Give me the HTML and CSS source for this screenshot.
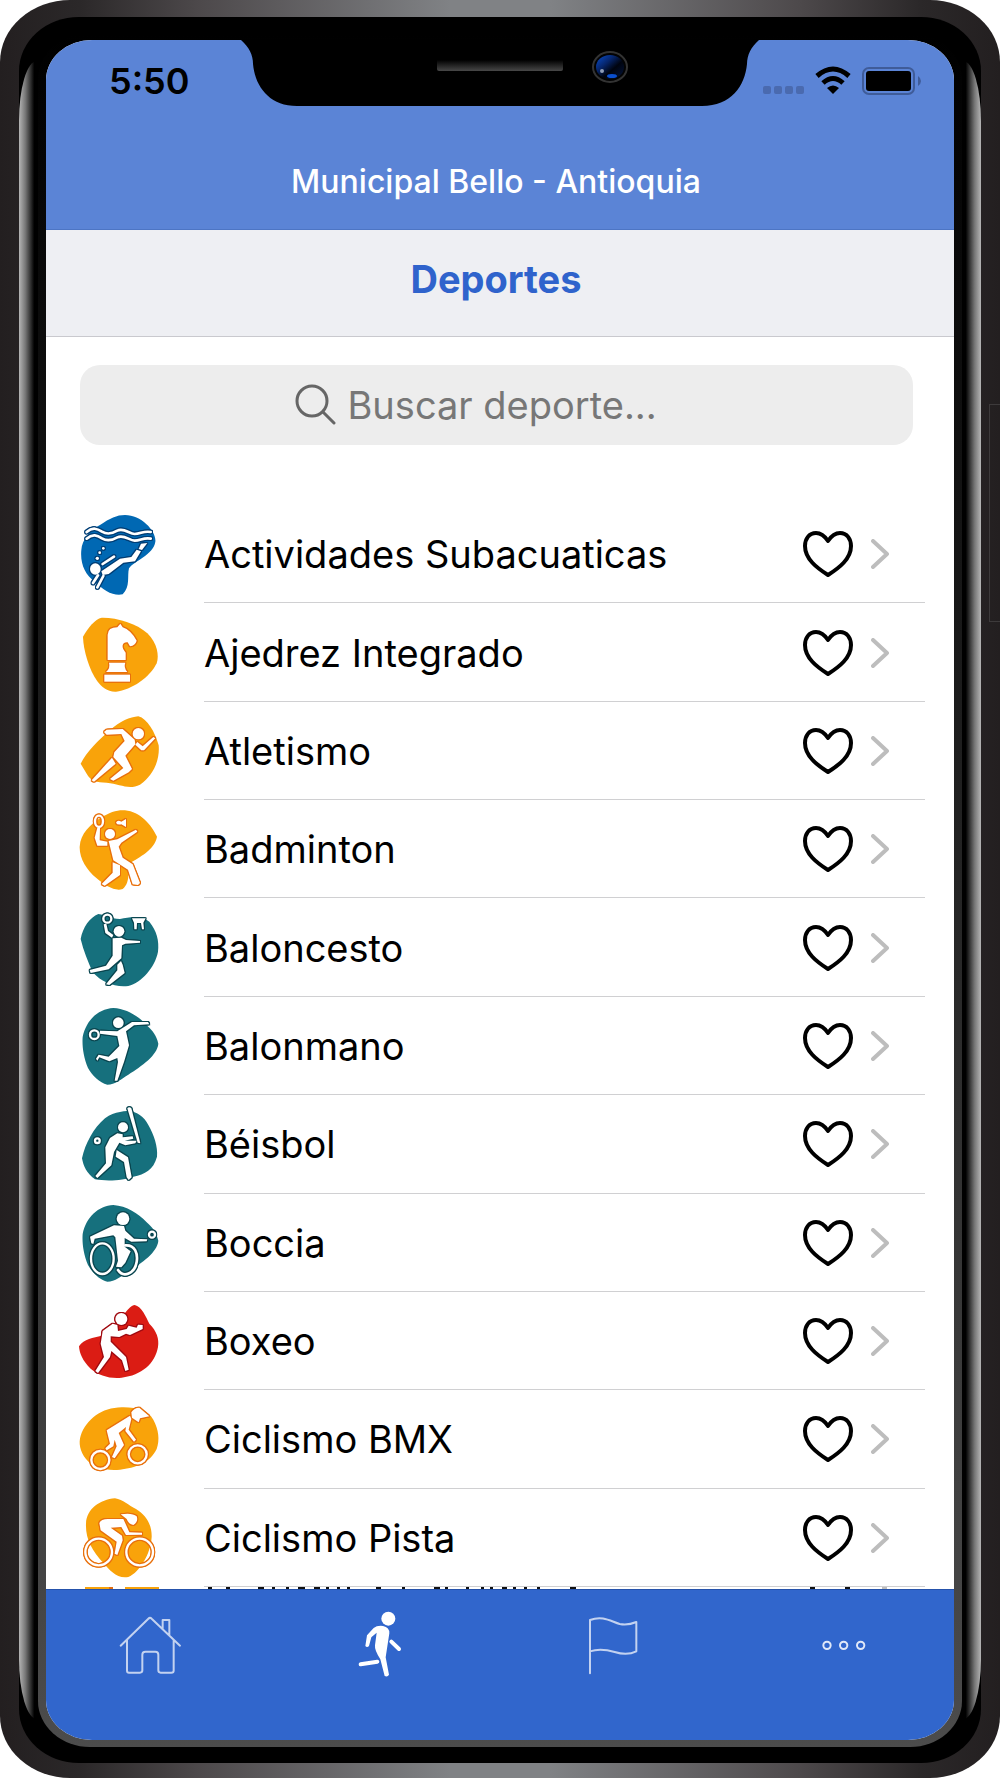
FILE: index.html
```html
<!DOCTYPE html>
<html lang="es">
<head>
  <meta charset="UTF-8">
  <meta name="viewport" content="width=device-width, initial-scale=1">
  <title>Deportes</title>
  <link rel="stylesheet" href="styles.css">
</head>
<body>

  <svg class="defs" aria-hidden="true">
    <symbol id="heart" viewBox="0 0 54 50">
      <path d="M27 12 C23 6 18 4 15 4 C8 4 4 10 4 17 C4 30 16 39 27 46 C38 39 50 30 50 17 C50 10 46 4 39 4 C36 4 31 6 27 12Z"/>
    </symbol>
    <symbol id="chevron" viewBox="0 0 18 30">
      <path d="M2 2 L16 15 L2 28"/>
    </symbol>
  </svg>

  <div class="phone">
    <div class="side-button"></div>
    <div class="bezel">
      <div class="rim">
        <div class="screen">

          <!-- Notch -->
          <svg class="notch" viewBox="0 0 518 67" aria-hidden="true">
            <defs>
              <linearGradient id="speaker" x1="0" y1="0" x2="0" y2="1">
                <stop offset="0" stop-color="#000"/>
                <stop offset="1" stop-color="#484848"/>
              </linearGradient>
              <linearGradient id="lens" x1="0" y1="0" x2="1" y2="1">
                <stop offset="0" stop-color="#0a4fd0"/>
                <stop offset="0.35" stop-color="#06256b"/>
                <stop offset="0.6" stop-color="#00040f"/>
                <stop offset="1" stop-color="#03153f"/>
              </linearGradient>
            </defs>
            <path d="M0 0 C8 7 12 15 12 24 C14 46 28 66 56 66 H461 C490 66 504 46 506 24 C506 15 510 7 518 0Z"/>
            <path d="M196 20 H322 V29 Q322 31 320 31 H198 Q196 31 196 29Z" fill="url(#speaker)"/>
            <ellipse cx="369" cy="27" rx="17" ry="15" fill="#030303" stroke="#333" stroke-width="2"/>
            <ellipse cx="369" cy="27" rx="14" ry="12" fill="url(#lens)"/>
            <circle cx="361" cy="31" r="2" fill="#8f9db8"/>
            <ellipse cx="371" cy="36" rx="5" ry="2" fill="#0a4fd0"/>
          </svg>

          <header class="topbar">
            <div class="status">
              <span class="clock">5:50</span>
              <svg class="status-icons" viewBox="0 0 160 30" aria-hidden="true">
                <g fill="#4a6aaf">
                  <rect x="1" y="20" width="8" height="8" rx="2"/>
                  <rect x="12" y="20" width="8" height="8" rx="2"/>
                  <rect x="23" y="20" width="8" height="8" rx="2"/>
                  <rect x="34" y="20" width="8" height="8" rx="2"/>
                </g>
                <g fill="none" stroke="#000" stroke-width="5">
                  <path d="M55 10 Q71 -4 87 10"/>
                  <path d="M61 17 Q71 8 81 17"/>
                </g>
                <path d="M71 28 L65 22 Q71 17 77 22Z"/>
                <rect x="101" y="2" width="51" height="26" rx="6" fill="none" stroke="#3f5c99" stroke-width="2"/>
                <rect x="104" y="5" width="45" height="20" rx="3"/>
                <path d="M156 10 Q159 12 159 15 Q159 18 156 20Z" fill="#3f5c99"/>
              </svg>
            </div>
            <p class="place">Municipal Bello - Antioquia</p>
          </header>

          <h1 class="section-title">Deportes</h1>

          <main class="content">
            <label class="search">
              <svg viewBox="0 0 42 42" aria-hidden="true">
                <circle cx="18" cy="17" r="15"/>
                <path d="M29 28 L40 39"/>
              </svg>
              <input type="search" placeholder="Buscar deporte..." aria-label="Buscar deporte">
            </label>

            <ul class="sports">
              <li class="sport">
                <svg class="icon navy" viewBox="54 36 252 252" aria-hidden="true">
                  <path class="blob" d="M195 45 C245 45 290 95 286 125 C280 165 222 182 207 205 C201 228 212 260 188 283 C162 290 128 270 105 245 C75 225 60 190 64 150 C66 120 90 90 120 75 C150 55 170 45 195 45Z"/>
                  <g class="figure">
                    <path class="line" d="M80 96 C98 80 112 86 126 95 C144 106 160 99 172 92 C192 82 208 102 224 102 C242 102 250 92 272 96"/>
                    <path class="line" d="M80 116 C98 100 112 106 126 115 C144 126 160 119 172 112 C192 102 208 122 224 122 C242 122 250 112 272 116"/>
                    <ellipse cx="106" cy="207" rx="16" ry="17"/>
                    <path d="M124 214 L180 176 L214 171 L230 149 L243 154 L225 184 L190 188 L146 222 L128 225Z"/>
                    <path d="M243 131 L262 129 L246 150 L236 147Z"/>
                    <path class="line" d="M128 192 L162 170 M114 226 L99 249 M130 228 L112 262"/>
                    <circle cx="112" cy="175" r="5"/><circle cx="119" cy="158" r="4"/><circle cx="130" cy="145" r="4"/>
                  </g>
                </svg>
                <a class="name" href="#">Actividades Subacuaticas</a>
                <button class="fav" aria-label="Marcar Actividades Subacuaticas"><svg><use href="#heart"/></svg></button>
                <svg class="chevron" aria-hidden="true"><use href="#chevron"/></svg>
              </li>

              <li class="sport">
                <svg class="icon orange" viewBox="54 331 252 252" aria-hidden="true">
                  <path class="blob" d="M125 351 C170 350 230 368 262 398 C292 428 298 465 290 488 C270 530 215 568 168 573 C142 574 125 560 112 542 C88 508 70 450 69 408 C85 380 105 355 125 351Z"/>
                  <g class="figure">
                    <path d="M143 478 L143 402 Q144 380 172 380 L181 369 L188 380 Q212 388 230 420 Q226 434 210 437 L203 425 Q190 424 188 434 Q186 444 197 456 L197 478Z"/>
                    <path d="M147 486 H196 Q190 500 202 514 H138 Q152 502 147 486Z"/>
                    <path d="M133 522 H210 V543 H133Z"/>
                  </g>
                </svg>
                <a class="name" href="#">Ajedrez Integrado</a>
                <button class="fav" aria-label="Marcar Ajedrez Integrado"><svg><use href="#heart"/></svg></button>
                <svg class="chevron" aria-hidden="true"><use href="#chevron"/></svg>
              </li>

              <li class="sport">
                <svg class="icon orange" viewBox="54 626 252 252" aria-hidden="true">
                  <path class="blob" d="M235 648 C262 655 285 695 296 735 C300 780 280 825 240 853 C205 870 180 850 140 847 C110 846 92 842 80 820 L62 790 C80 755 115 720 150 690 C180 662 210 650 235 648Z"/>
                  <g class="figure">
                    <circle cx="235" cy="700" r="17"/>
                    <path d="M132 695 L140 688 L188 686 L224 718 L226 732 L196 766 L216 806 L206 816 L160 841 L150 836 L190 803 L160 770 L163 756 L194 722 L184 701 L140 703Z"/>
                    <path d="M226 733 L232 725 L248 738 L280 710 L286 714 L252 750 L244 750Z"/>
                    <path d="M156 772 L167 790 L102 844 L95 840Z"/>
                  </g>
                </svg>
                <a class="name" href="#">Atletismo</a>
                <button class="fav" aria-label="Marcar Atletismo"><svg><use href="#heart"/></svg></button>
                <svg class="chevron" aria-hidden="true"><use href="#chevron"/></svg>
              </li>

              <li class="sport">
                <svg class="icon orange" viewBox="54 36 252 252" aria-hidden="true">
                  <path class="blob" d="M195 46 C240 50 275 90 291 125 C284 165 235 188 212 203 C200 220 215 260 188 282 C165 290 135 272 110 250 C80 225 58 190 59 155 C62 115 90 90 120 70 C150 50 175 44 195 46Z"/>
                  <g class="figure">
                    <ellipse class="ring" cx="117" cy="79" rx="12" ry="17"/>
                    <path d="M112 98 L120 98 L119 136 L142 140 L142 152 L112 152 L104 128Z"/>
                    <circle cx="150" cy="117" r="15"/>
                    <path d="M146 138 L172 133 L228 104 L232 110 L184 143 L176 155 L188 188 L218 208 L240 264 L234 270 L218 268 L204 224 L160 196Z"/>
                    <path d="M158 202 L180 211 L180 240 L134 272 L125 267 L158 233Z"/>
                    <path d="M168 83 Q172 74 184 80 L198 72 L198 96 L184 88 Q172 91 168 83Z"/>
                  </g>
                </svg>
                <a class="name" href="#">Badminton</a>
                <button class="fav" aria-label="Marcar Badminton"><svg><use href="#heart"/></svg></button>
                <svg class="chevron" aria-hidden="true"><use href="#chevron"/></svg>
              </li>

              <li class="sport">
                <svg class="icon teal" viewBox="54 331 252 252" aria-hidden="true">
                  <path class="blob" d="M115 355 C140 358 150 370 180 370 C215 362 250 362 268 378 C290 405 298 435 294 468 C285 515 245 560 205 571 C165 576 125 560 98 530 C85 500 70 465 62 430 C68 395 90 365 115 355Z"/>
                  <g class="figure">
                    <circle class="ring" cx="142" cy="369" r="12"/>
                    <path d="M131 386 L139 384 L144 406 L160 418 L156 426 L136 412Z"/>
                    <circle cx="177" cy="407" r="16"/>
                    <path d="M158 428 L184 426 L198 433 L240 436 L240 441 L196 444 L186 449 L184 488 L146 521 L92 532 L89 523 L138 510 L158 480Z"/>
                    <path d="M183 496 L172 507 L172 524 L138 566 L148 568 L194 532 L188 507Z"/>
                    <path d="M216 368 H257 L250 381 L252 401 H246 L243 382 H231 L230 401 H223 L222 381Z"/>
                  </g>
                </svg>
                <a class="name" href="#">Baloncesto</a>
                <button class="fav" aria-label="Marcar Baloncesto"><svg><use href="#heart"/></svg></button>
                <svg class="chevron" aria-hidden="true"><use href="#chevron"/></svg>
              </li>

              <li class="sport">
                <svg class="icon teal" viewBox="54 626 252 252" aria-hidden="true">
                  <path class="blob" d="M160 638 C200 640 235 662 260 690 C278 705 290 722 295 745 C292 780 245 812 205 838 C185 850 165 868 142 868 C118 862 98 842 84 818 C70 785 66 750 68 725 C78 675 115 640 160 638Z"/>
                  <g class="figure">
                    <circle cx="175" cy="682" r="16"/>
                    <circle class="ring" cx="103" cy="718" r="13"/>
                    <path d="M120 706 L172 708 L216 680 L264 680 L268 687 L222 690 L198 708 L207 750 L192 800 L172 856 L164 856 L174 800 L172 788 L148 798 L118 786 L112 796 L108 790 L116 778 L146 784 L178 752 L172 722 L120 715Z"/>
                  </g>
                </svg>
                <a class="name" href="#">Balonmano</a>
                <button class="fav" aria-label="Marcar Balonmano"><svg><use href="#heart"/></svg></button>
                <svg class="chevron" aria-hidden="true"><use href="#chevron"/></svg>
              </li>

              <li class="sport">
                <svg class="icon teal" viewBox="54 36 252 252" aria-hidden="true">
                  <path class="blob" d="M180 66 C220 56 250 75 265 105 C282 135 294 170 291 200 C280 240 255 252 220 260 C190 272 140 274 105 268 C80 250 70 228 66 205 C76 160 100 115 135 85 C150 73 165 68 180 66Z"/>
                  <g class="figure">
                    <circle class="ring" cx="112" cy="152" r="7"/>
                    <circle cx="189" cy="112" r="15"/>
                    <path d="M202 55 Q208 49 214 55 L241 160 L233 158Z"/>
                    <path d="M150 144 L172 130 L188 133 L188 142 L218 139 L220 146 L194 152 L230 152 L226 160 L196 166 L178 158 L162 186 L154 226 L112 264 L106 258 L138 220 L136 172Z"/>
                    <path d="M170 180 L204 202 L215 262 L206 270 L200 262 L192 216 L167 200Z"/>
                  </g>
                </svg>
                <a class="name" href="#">Béisbol</a>
                <button class="fav" aria-label="Marcar Béisbol"><svg><use href="#heart"/></svg></button>
                <svg class="chevron" aria-hidden="true"><use href="#chevron"/></svg>
              </li>

              <li class="sport">
                <svg class="icon teal" viewBox="54 331 252 252" aria-hidden="true">
                  <path class="blob" d="M160 343 C200 346 235 368 260 395 C278 410 290 428 295 450 C292 485 245 517 205 543 C185 555 165 573 142 573 C118 567 98 547 84 523 C70 490 66 455 68 430 C78 380 115 345 160 343Z"/>
                  <g class="figure">
                    <circle cx="189" cy="384" r="19"/>
                    <path d="M90 438 L162 404 L192 406 L196 420 L222 444 L262 446 L260 452 L214 453 L194 442 L194 468 L212 482 L196 516 L184 530 L168 528 L174 510 L166 440 L160 434 L104 444 L100 460 L94 458Z"/>
                    <ellipse class="ring" cx="127" cy="504" rx="34" ry="46"/>
                    <path class="line" d="M196 464 C226 462 234 490 230 514 C224 550 190 562 174 538"/>
                    <circle class="ring" cx="276" cy="432" r="9"/>
                  </g>
                </svg>
                <a class="name" href="#">Boccia</a>
                <button class="fav" aria-label="Marcar Boccia"><svg><use href="#heart"/></svg></button>
                <svg class="chevron" aria-hidden="true"><use href="#chevron"/></svg>
              </li>

              <li class="sport">
                <svg class="icon red" viewBox="54 626 252 252" aria-hidden="true">
                  <path class="blob" d="M224 644 C245 648 258 680 268 700 C290 722 298 745 294 770 C285 820 245 855 185 862 C150 866 115 855 92 835 C68 812 58 788 57 768 C72 745 100 742 125 736 C155 725 175 695 195 668 C205 655 215 645 224 644Z"/>
                  <g class="figure">
                    <circle cx="184" cy="686" r="18"/>
                    <path d="M128 722 L158 700 L172 704 L174 722 L200 716 L206 706 L220 710 L230 712 L234 703 L248 704 L248 716 L210 734 L198 730 L178 740 L152 738 L152 754 L198 800 L206 838 L196 842 L186 810 L154 782 L150 800 L114 848 L106 842 L132 800 L122 760Z"/>
                  </g>
                </svg>
                <a class="name" href="#">Boxeo</a>
                <button class="fav" aria-label="Marcar Boxeo"><svg><use href="#heart"/></svg></button>
                <svg class="chevron" aria-hidden="true"><use href="#chevron"/></svg>
              </li>

              <li class="sport">
                <svg class="icon orange" viewBox="54 52 252 252" aria-hidden="true">
                  <path class="blob" d="M185 83 C230 82 265 92 280 120 C296 150 300 180 290 208 C270 250 225 265 180 270 C140 274 100 265 78 238 C60 215 55 190 62 168 C80 118 125 84 185 83Z"/>
                  <g class="figure">
                    <circle class="ring" cx="121" cy="241" r="27"/>
                    <circle class="ring" cx="233" cy="224" r="27"/>
                    <path d="M214 98 Q222 84 238 84 L268 110 L240 116 L236 128 L216 114Z"/>
                    <path d="M140 152 L210 108 L214 118 L206 150 L228 180 L222 186 L196 154 L198 142 L176 160 L192 196 L164 236 L156 232 L170 200 L164 180 L160 200 L140 212 L136 206 L150 192Z"/>
                  </g>
                </svg>
                <a class="name" href="#">Ciclismo BMX</a>
                <button class="fav" aria-label="Marcar Ciclismo BMX"><svg><use href="#heart"/></svg></button>
                <svg class="chevron" aria-hidden="true"><use href="#chevron"/></svg>
              </li>

              <li class="sport">
                <svg class="icon orange" viewBox="54 347 252 252" aria-hidden="true">
                  <path class="blob" d="M165 354 C190 358 205 375 228 386 C260 405 276 435 275 470 C272 520 240 575 205 590 C170 596 150 570 130 548 C95 510 76 475 78 430 C80 385 120 358 165 354Z"/>
                  <g class="figure">
                    <circle class="ring" cx="116" cy="515" r="40"/>
                    <circle class="ring" cx="239" cy="515" r="40"/>
                    <path d="M182 402 Q216 396 230 408 Q236 424 220 434 Q206 432 200 416Z"/>
                    <path d="M118 428 Q124 414 150 416 L190 416 L202 442 L208 456 L246 457 L246 463 L198 464 L184 440 L152 442 L186 466 L188 480 L172 524 L164 520 L170 484 L122 450Z"/>
                  </g>
                </svg>
                <a class="name" href="#">Ciclismo Pista</a>
                <button class="fav" aria-label="Marcar Ciclismo Pista"><svg><use href="#heart"/></svg></button>
                <svg class="chevron" aria-hidden="true"><use href="#chevron"/></svg>
              </li>

              <!-- sliver of the next row above the tab bar -->
              <li class="peek" aria-hidden="true">
                <svg width="74" height="2"><path stroke="#f7a20b" stroke-width="2" d="M0 1h24M40 1h34"/><path stroke="#e06b10" stroke-width="2" d="M24 1h4"/></svg>
                <svg width="380" height="2"><path stroke="#111" stroke-width="2" d="M4 1h4M22 1h4M54 1h6M68 1h3M82 1h3M94 1h7M110 1h6M122 1h3M133 1h3M143 1h3M172 1h5M198 1h3M230 1h6M241 1h3M262 1h3M277 1h3M286 1h3M298 1h5M309 1h3M320 1h3M333 1h3M366 1h6"/></svg>
                <svg class="peek-end" width="84" height="2"><path stroke="#111" stroke-width="2" d="M1 1h5M36 1h5"/><path stroke="#bdbdbd" stroke-width="2" d="M73 1h5"/></svg>
              </li>
            </ul>
          </main>

          <nav class="tabbar">
            <a class="tab" href="#" aria-label="Inicio">
              <svg viewBox="354 120 192 210">
                <path d="M362 227 L445 146 Q450 141 455 146 L540 227 M381 211 V302 Q381 308 387 308 H420 Q427 308 427 301 V254 Q427 245 436 245 H466 Q475 245 475 254 V301 Q475 308 482 308 H514 Q521 308 521 302 V211 M488 176 V150 H508 V194"/>
              </svg>
            </a>
            <a class="tab active" href="#" aria-label="Deportes">
              <svg viewBox="1046 120 192 210">
                <circle cx="1164" cy="146" r="21"/>
                <path d="M1120 174 Q1130 166 1148 168 Q1168 172 1167 190 L1156 262 L1166 314 Q1162 322 1153 318 L1140 268 Q1122 240 1124 226 L1129 188 L1113 202 L1106 228 Q1100 234 1095 228 L1100 196Z"/>
                <path class="limb" d="M1173 215 L1196 237 M1081 283 L1131 275"/>
              </svg>
            </a>
            <a class="tab" href="#" aria-label="Eventos">
              <svg viewBox="241 120 192 210">
                <path d="M271 310 V150 C310 135 335 155 360 162 C380 166 396 162 410 156 V244 C390 254 370 254 345 246 C318 238 295 236 271 244"/>
              </svg>
            </a>
            <a class="tab" href="#" aria-label="Más">
              <svg class="dots" viewBox="933 120 192 210">
                <circle cx="981" cy="226" r="11"/>
                <circle cx="1031" cy="226" r="11"/>
                <circle cx="1082" cy="226" r="11"/>
              </svg>
            </a>
          </nav>

        </div>
      </div>
    </div>
  </div>

</body>
</html>
```
FILE: styles.css
```css
* {
  box-sizing: border-box;
}

body {
  margin: 0;
  background: #fff;
  font-family: Inter, 'Noto Sans', sans-serif;
  color: #000;
}

.defs {
  display: none;
}

/* Phone frame */
.phone {
  position: relative;
  display: flex;
  height: 100vh;
  min-height: 900px;
  padding: 17px 19px 15px;
  border-radius: 70px / 62px;
  overflow: hidden;
  background: linear-gradient(to right, #231f20, #2b2829 8%, #4d494b 20%, #808285 45%, #808285 55%, #4d494b 80%, #2b2829 92%, #231f20);
}

.side-button {
  position: absolute;
  top: 404px;
  right: 0;
  width: 11px;
  height: 218px;
  border: 1px solid #3d3a3b;
  border-right: none;
}

.bezel {
  position: relative;
  display: flex;
  flex: 1;
  padding: 16px 19px;
  border-radius: 60px / 54px;
  background: #000;
}

.bezel::before,
.bezel::after {
  content: "";
  position: absolute;
  top: 44px;
  bottom: 44px;
  width: 18px;
}

.bezel::before {
  left: 0;
  border-radius: 18px 0 0 18px / 60px 0 0 60px;
  background: linear-gradient(to right, #b5b5b5, #777 35%, #000 85%);
}

.bezel::after {
  right: 0;
  border-radius: 0 18px 18px 0 / 0 60px 60px 0;
  background: linear-gradient(to left, #b5b5b5, #777 35%, #000 85%);
}

.rim {
  position: relative;
  z-index: 1;
  display: flex;
  flex: 1;
  padding: 7px 8px;
  border-radius: 52px / 46px;
  background: linear-gradient(#000, #111 25%, #4c4c4c);
}

.screen {
  position: relative;
  display: flex;
  flex: 1;
  flex-direction: column;
  overflow: hidden;
  border-radius: 46px / 40px;
  background: #fff;
}

.notch {
  position: absolute;
  top: 0;
  left: 50%;
  width: 518px;
  height: 67px;
  transform: translateX(-50%);
}

/* Header */
.topbar {
  height: 190px;
  border-bottom: 1px solid #4d75c4;
  background: #5b84d6;
}

.status {
  display: flex;
  justify-content: space-between;
  align-items: center;
  height: 82px;
  padding: 0 32px 0 63px;
}

.clock {
  font-size: 36px;
  font-weight: 600;
}

.status-icons {
  width: 160px;
  height: 30px;
}

.place {
  margin: 40px 0 0;
  padding-right: 8px;
  color: #fff;
  font-size: 32px;
  font-weight: 500;
  line-height: 40px;
  text-align: center;
}

.section-title {
  height: 107px;
  margin: 0;
  padding: 29px 8px 0 0;
  border-bottom: 1px solid #c9c9ce;
  background: #eeeff3;
  color: #2f63cc;
  font-size: 38px;
  font-weight: 700;
  line-height: 40px;
  text-align: center;
}

/* List */
.content {
  display: flex;
  flex: 1;
  flex-direction: column;
  min-height: 0;
  padding: 28px 29px 0 32px;
}

.search {
  display: flex;
  justify-content: center;
  align-items: center;
  gap: 12px;
  height: 80px;
  margin: 0 12px 60px 2px;
  border-radius: 20px;
  background: #ededed;
}

.search svg {
  width: 42px;
  height: 42px;
  fill: none;
  stroke: #666;
  stroke-width: 3;
  stroke-linecap: round;
}

.search input {
  width: 352px;
  padding: 0;
  border: none;
  outline: none;
  background: none;
  color: #000;
  font-family: inherit;
  font-size: 38px;
}

.search input::placeholder {
  color: #777;
}

.sports {
  display: grid;
  flex: 1;
  grid-template-rows: repeat(11, 1fr) 2px;
  min-height: 0;
  margin: 0;
  padding: 0;
  list-style: none;
}

.sport {
  position: relative;
  display: flex;
  align-items: center;
  padding-right: 36px;
}

.sport::after {
  content: "";
  position: absolute;
  right: 0;
  bottom: 0;
  left: 126px;
  border-bottom: 1px solid #d0d0d2;
}

.icon {
  width: 84px;
  height: 84px;
  margin-right: 42px;
}

.name {
  flex: 1;
  color: #000;
  font-size: 38px;
  line-height: 44px;
  text-decoration: none;
}

.fav {
  width: 54px;
  height: 50px;
  margin-right: 16px;
  padding: 0;
  border: none;
  background: none;
  cursor: pointer;
}

.fav svg {
  display: block;
  width: 54px;
  height: 50px;
  fill: none;
  stroke: #000;
  stroke-width: 4;
  stroke-linejoin: round;
}

.chevron {
  width: 18px;
  height: 30px;
  fill: none;
  stroke: #bdbdbd;
  stroke-width: 4;
  stroke-linecap: round;
  stroke-linejoin: round;
}

.peek {
  display: flex;
  gap: 45px;
  overflow: hidden;
  padding: 0 32px 0 7px;
}

.peek-end {
  margin-left: auto;
}

/* Sport pictograms */
.navy { --blob: #0068b3; --edge: #003e75; }
.orange { --blob: #f9a30a; --edge: #e8700c; }
.teal { --blob: #16707d; --edge: #0a4650; }
.red { --blob: #db1c14; --edge: #a00a10; }

.blob {
  fill: var(--blob);
}

.figure {
  fill: #fff;
  stroke-linejoin: round;
  filter: drop-shadow(3px 0 0 var(--edge)) drop-shadow(-3px 0 0 var(--edge)) drop-shadow(0 3px 0 var(--edge)) drop-shadow(0 -3px 0 var(--edge));
}

.figure .line,
.figure .ring {
  fill: none;
  stroke: #fff;
  stroke-width: 8;
  stroke-linecap: round;
}

.figure .ring {
  stroke-width: 7;
}

/* Tab bar */
.tabbar {
  display: flex;
  justify-content: space-between;
  height: 151px;
  padding: 20px 79px 0 72px;
  border-top: 1px solid #2552ab;
  background: #3166cc;
}

.tab svg {
  display: block;
  width: 64px;
  height: 70px;
  fill: none;
  stroke: #c3d2f0;
  stroke-width: 6;
  stroke-linecap: round;
  stroke-linejoin: round;
}

.tab.active svg {
  fill: #fff;
  stroke: none;
}

.tab.active .limb {
  stroke: #fff;
  stroke-width: 12;
}

.tab .dots {
  stroke: #e0e8f8;
}
```
